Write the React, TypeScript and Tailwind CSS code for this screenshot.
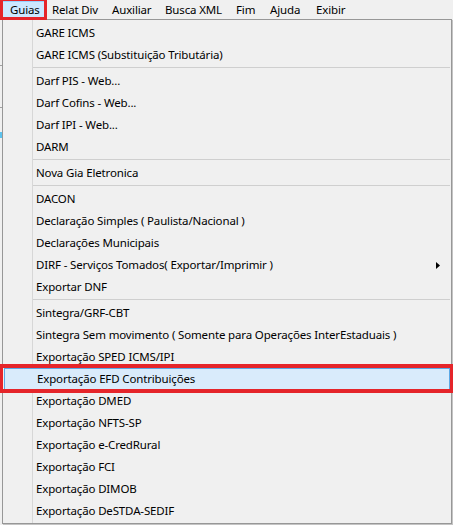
const menuBar = [
  { label: 'Guias', w: 'w-[43px]', active: true },
  { label: 'Relat Div', w: 'w-[60px]' },
  { label: 'Auxiliar', w: 'w-[53px]' },
  { label: 'Busca XML', w: 'w-[71px]' },
  { label: 'Fim', w: 'w-[34px]' },
  { label: 'Ajuda', w: 'w-[46px]' },
  { label: 'Exibir', w: 'w-[50px]' },
];

// null = separator
const items: (string | null)[] = [
  'GARE ICMS',
  'GARE ICMS (Substituição Tributária)',
  null,
  'Darf PIS - Web...',
  'Darf Cofins - Web...',
  'Darf IPI - Web...',
  'DARM',
  null,
  'Nova Gia Eletronica',
  null,
  'DACON',
  'Declaração Simples ( Paulista/Nacional )',
  'Declarações Municipais',
  'DIRF - Serviços Tomados( Exportar/Imprimir )',
  'Exportar DNF',
  null,
  'Sintegra/GRF-CBT',
  'Sintegra Sem movimento ( Somente para Operações InterEstaduais )',
  'Exportação SPED ICMS/IPI',
  'Exportação EFD Contribuições',
  'Exportação DMED',
  'Exportação NFTS-SP',
  'Exportação e-CredRural',
  'Exportação FCI',
  'Exportação DIMOB',
  'Exportação DeSTDA-SEDIF',
];

const HIGHLIGHTED = 'Exportação EFD Contribuições';
const SUBMENU = 'DIRF - Serviços Tomados( Exportar/Imprimir )';

export default function App() {
  return (
    <div className="relative w-[453px] h-[525px] overflow-hidden bg-[#f0f0f0] text-[11.5px] tracking-[-0.15px] text-black font-['Segoe_UI','Noto_Sans',sans-serif]">
      {/* Menu bar */}
      <div className="flex h-[19px] pl-[2px]">
        {menuBar.map((m) => (
          <div
            key={m.label}
            className={`${m.w} flex items-center pl-[7px] whitespace-nowrap ${
              m.active ? 'mt-[1px] h-[17px] bg-[#cce8ff] border border-[#99d1ff] pl-[6px]' : ''
            }`}
          >
            {m.label}
          </div>
        ))}
      </div>

      {/* Window behind the menu */}
      <div className="flex flex-col">
        <div className="h-[46px]" />
        <div className="h-px bg-[#a0a0a0]" />
        <div className="h-[41px]" />
        <div className="h-px bg-[#a0a0a0]" />
        <div className="h-[24px]" />
        <div className="h-[6px] bg-[#5cc3ee]" />
      </div>

      {/* Dropdown */}
      <div className="absolute left-[2px] top-[19px] w-[450px] h-[505px] border border-[#979797] bg-[#f0f0f0] shadow-[1px_1px_0_#c4c4c4] pt-[2px] pl-[1px] pr-[1px]">
        <div className="absolute left-[29px] top-0 bottom-0 w-px bg-[#d7d7d7]" />
        {items.map((it, i) =>
          it === null ? (
            <div key={i} className="relative h-[4px] pt-[1px] pl-[29px]">
              <div className="h-px bg-[#cfcfcf]" />
            </div>
          ) : (
            <div
              key={i}
              className={`relative h-[22px] flex items-center pl-[32px] whitespace-nowrap ${
                it === HIGHLIGHTED ? 'bg-[#d9ebfb] border border-[#5ba8e6] pl-[31px]' : ''
              }`}
            >
              {it}
              {it === SUBMENU && (
                <svg className="absolute right-[10px] top-[8px]" width="4" height="7" viewBox="0 0 4 7">
                  <path d="M0 0L4 3.5L0 7Z" fill="#000" />
                </svg>
              )}
            </div>
          )
        )}
      </div>

      {/* Annotation boxes */}
      <div className="absolute left-0 top-[-2px] w-[47px] h-[22px] border-[3px] border-[#e5252a]" />
      <div className="absolute left-[-1px] top-[364px] w-[455px] h-[29px] border-4 border-[#e5252a]" />
    </div>
  );
}
